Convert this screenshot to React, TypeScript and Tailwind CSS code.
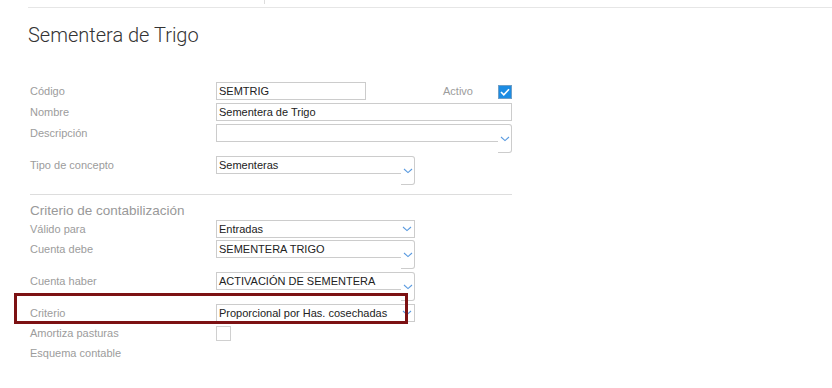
import React from 'react';

const Chevron: React.FC = () => (
    <svg width="10" height="6" viewBox="0 0 10 6" fill="none">
        <path d="M1 1 L5 4.6 L9 1" stroke="#5b9be0" strokeWidth="1.1" />
    </svg>
);

const Label: React.FC<{ text: string }> = ({ text }) => (
    <div className="w-[186px] h-[18px] flex items-center text-[11px] text-[#9c9c9c] shrink-0">{text}</div>
);

const TextBox: React.FC<{ value: string; width: string }> = ({ value, width }) => (
    <div className={`${width} h-[18px] border border-[#cccccc] px-[2px] flex items-center text-[11px] text-[#222]`}>{value}</div>
);

const SelectBox: React.FC<{ value: string }> = ({ value }) => (
    <div className="w-[199px] h-[18px] border border-[#cccccc] pl-[2px] pr-[2px] flex items-center justify-between text-[11px] text-[#222]">
        <span>{value}</span>
        <Chevron />
    </div>
);

// input + dropdown column hanging below it
const ComboBox: React.FC<{ value: string; width: string }> = ({ value, width }) => (
    <div className={`${width} flex items-start`}>
        <div className="flex-1 h-[18px] border-l border-t border-b border-[#cccccc] px-[2px] flex items-center text-[11px] text-[#222]">{value}</div>
        <div className="w-[14px] h-[29px] border-t border-r border-b border-[#cccccc] rounded-r-[3px] flex items-center justify-center">
            <Chevron />
        </div>
    </div>
);

const App: React.FC = () => {
    return (
        <div className="relative w-[832px] h-[388px] bg-white overflow-hidden font-['Liberation_Sans',Arial,sans-serif]">
            {/* top bar */}
            <div className="ml-[28px] h-[8px] border-b border-[#e6e6e6]">
                <div className="ml-[236px] w-px h-[4px] bg-[#dddddd]" />
            </div>

            <h1 className="ml-[28px] mt-[13px] text-[20px] leading-[28px] font-light text-[#333] font-['Roboto',sans-serif]">
                Sementera de Trigo
            </h1>

            <div className="ml-[30px] mt-[33px] w-[482px] flex flex-col">
                <div className="flex items-start">
                    <Label text="Código" />
                    <TextBox value="SEMTRIG" width="w-[150px]" />
                    <div className="ml-[77px] h-[18px] flex items-center text-[11px] text-[#9c9c9c]">Activo</div>
                    <div className="ml-auto mt-[3px] w-[14px] h-[14px] bg-[#1c8ce3] border border-[#6f9fc7] flex items-center justify-center">
                        <svg width="10" height="8" viewBox="0 0 10 8" fill="none">
                            <path d="M1 4 L3.8 6.8 L9 1.2" stroke="white" strokeWidth="1.6" />
                        </svg>
                    </div>
                </div>
                <div className="flex items-start mt-[3px]">
                    <Label text="Nombre" />
                    <TextBox value="Sementera de Trigo" width="w-[296px]" />
                </div>
                <div className="flex items-start mt-[3px]">
                    <Label text="Descripción" />
                    <ComboBox value="" width="w-[296px]" />
                </div>
                <div className="flex items-start mt-[3px]">
                    <Label text="Tipo de concepto" />
                    <ComboBox value="Sementeras" width="w-[199px]" />
                </div>

                <div className="mt-[9px] h-px bg-[#dddddd]" />

                <h2 className="mt-[8px] text-[13.5px] leading-[16px] text-[#999999]">Criterio de contabilización</h2>

                <div className="flex items-start mt-[1px]">
                    <Label text="Válido para" />
                    <SelectBox value="Entradas" />
                </div>
                <div className="flex items-start mt-[2px]">
                    <Label text="Cuenta debe" />
                    <ComboBox value="SEMENTERA TRIGO" width="w-[199px]" />
                </div>
                <div className="flex items-start mt-[3px]">
                    <Label text="Cuenta haber" />
                    <ComboBox value="ACTIVACIÓN DE SEMENTERA" width="w-[199px]" />
                </div>
                <div className="flex items-start mt-[3px]">
                    <Label text="Criterio" />
                    <SelectBox value="Proporcional por Has. cosechadas" />
                </div>
                <div className="flex items-center mt-[4px]">
                    <div className="w-[186px] h-[14px] flex items-center text-[11px] text-[#9c9c9c]">Amortiza pasturas</div>
                    <div className="w-[15px] h-[15px] border border-[#d0d0d0]" />
                </div>
                <div className="flex items-start mt-[3px]">
                    <Label text="Esquema contable" />
                </div>
            </div>

            {/* highlight box */}
            <div className="absolute left-[14px] top-[293px] w-[394px] h-[31px] border-[3px] border-[#7c1113]" />
        </div>
    );
};

export default App;
